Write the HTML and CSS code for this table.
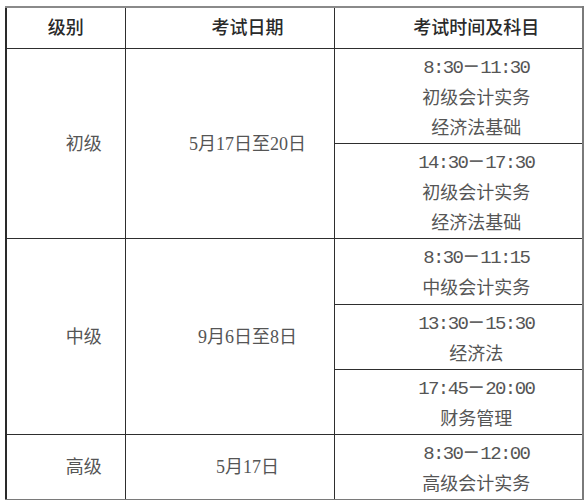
FILE: index.html
```html
<!DOCTYPE html>
<html lang="zh-CN">
<head>
<meta charset="utf-8">
<link rel="stylesheet" href="styles.css">
</head>
<body>
<table class="schedule">
  <colgroup>
    <col class="c1">
    <col class="c2">
    <col class="c3">
  </colgroup>
  <thead>
    <tr class="head">
      <th class="h-level">级别</th>
      <th class="indent">考试日期</th>
      <th class="indent">考试时间及科目</th>
    </tr>
  </thead>
  <tbody>
    <tr class="r94">
      <td rowspan="2" class="indent">初级</td>
      <td rowspan="2" class="indent date">5月17日至20日</td>
      <td class="indent slot"><span class="time">8:30<span class="dash">－</span>11:30</span><br>初级会计实务<br>经济法基础</td>
    </tr>
    <tr class="r94">
      <td class="indent slot"><span class="time">14:30<span class="dash">－</span>17:30</span><br>初级会计实务<br>经济法基础</td>
    </tr>
    <tr class="r67">
      <td rowspan="3" class="indent">中级</td>
      <td rowspan="3" class="indent date">9月6日至8日</td>
      <td class="indent slot"><span class="time">8:30<span class="dash">－</span>11:15</span><br>中级会计实务</td>
    </tr>
    <tr class="r65">
      <td class="indent slot"><span class="time">13:30<span class="dash">－</span>15:30</span><br>经济法</td>
    </tr>
    <tr class="r65">
      <td class="indent slot"><span class="time">17:45<span class="dash">－</span>20:00</span><br>财务管理</td>
    </tr>
    <tr class="r63">
      <td class="indent">高级</td>
      <td class="indent date">5月17日</td>
      <td class="indent slot"><span class="time">8:30<span class="dash">－</span>12:00</span><br>高级会计实务</td>
    </tr>
  </tbody>
</table>
</body>
</html>
```
FILE: styles.css
```css
html, body {
  margin: 0;
  padding: 0;
  background: #ffffff;
}

.schedule {
  border-collapse: collapse;
  table-layout: fixed;
  width: 577px;
  margin: 6px 0 0 5px;
  font-family: "Liberation Serif", "Noto Sans CJK SC", serif;
  font-size: 18px;
  color: #555555;
  border-top: 2px solid #8a8a8a;
  border-right: 2px solid #7a7a7a;
  border-bottom: 2px solid #7a7a7a;
  border-left: 2px solid #2a2a2a;
}

.c1 { width: 119px; }
.c2 { width: 209px; }
.c3 { width: 249px; }

.schedule th,
.schedule td {
  border: 1px solid #2e2e2e;
  padding: 0;
  text-align: center;
  line-height: 30px;
}

.schedule th {
  font-weight: 500;
  color: #2a2a2a;
  height: 40px;
}

.indent {
  padding-left: 36px !important;
}

.slot {
  vertical-align: top;
  padding-top: 3px !important;
}

.time {
  font-family: "Liberation Mono", monospace;
  font-size: 19px;
  letter-spacing: -1.6px;
}

.dash {
  font-family: "Noto Sans CJK SC", sans-serif;
  font-size: 18px;
  font-weight: 700;
  letter-spacing: 0;
  line-height: 0;
  color: #666666;
}

.r94 > td.slot { height: 89px; }
.r67 > td.slot { height: 62px; }
.r65 > td.slot { height: 60px; }
.r63 > td.slot { height: 58px; }
```
